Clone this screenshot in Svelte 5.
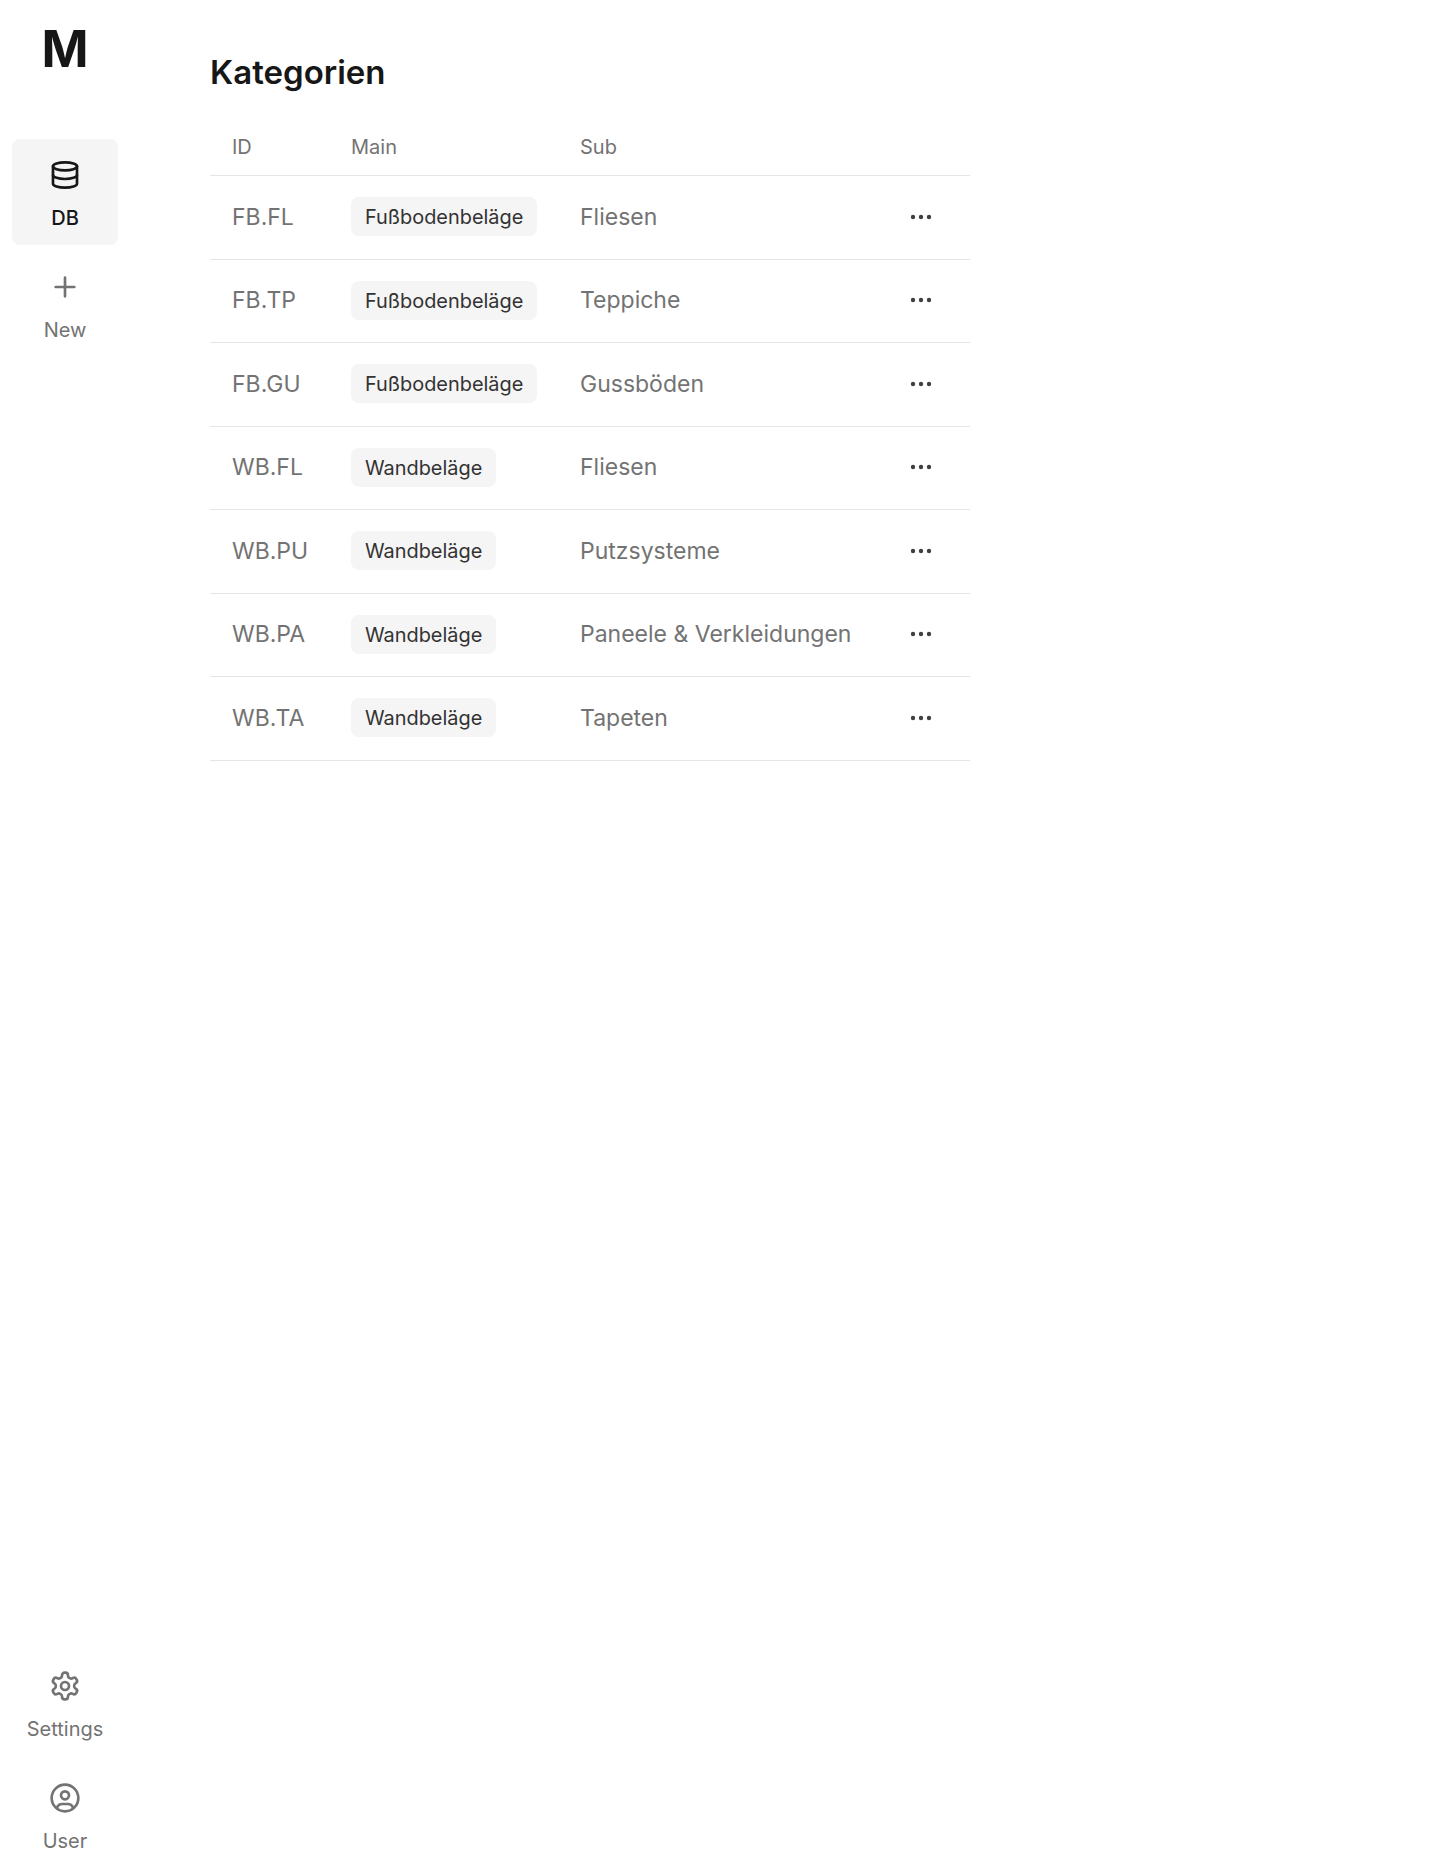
<script lang="ts">
const rows = [
	{ id: 'FB.FL', main: 'Fußbodenbeläge', sub: 'Fliesen' },
	{ id: 'FB.TP', main: 'Fußbodenbeläge', sub: 'Teppiche' },
	{ id: 'FB.GU', main: 'Fußbodenbeläge', sub: 'Gussböden' },
	{ id: 'WB.FL', main: 'Wandbeläge', sub: 'Fliesen' },
	{ id: 'WB.PU', main: 'Wandbeläge', sub: 'Putzsysteme' },
	{ id: 'WB.PA', main: 'Wandbeläge', sub: 'Paneele & Verkleidungen' },
	{ id: 'WB.TA', main: 'Wandbeläge', sub: 'Tapeten' }
];
</script>

<div class="layout">
	<nav class="sidebar">
		<div class="logo">M</div>

		<div class="nav-top">
			<button class="nav-item active">
				<svg viewBox="0 0 24 24" class="icon">
					<ellipse cx="12" cy="5.5" rx="9" ry="3" />
					<path d="M3 5.500v13c0 1.660 4 3 9 3s9-1.340 9-3v-13" />
					<path d="M3 12c0 1.660 4 3 9 3s9-1.340 9-3" />
				</svg>
				<span>DB</span>
			</button>
			<button class="nav-item">
				<svg viewBox="0 0 24 24" class="icon">
					<path d="M12 5v14M5 12h14" />
				</svg>
				<span>New</span>
			</button>
		</div>

		<div class="nav-bottom">
			<button class="nav-item">
				<svg viewBox="0 0 24 24" class="icon">
					<path d="M12.220 2h-.44a2 2 0 0 0-2 2v.18a2 2 0 0 1-1 1.730l-.43.25a2 2 0 0 1-2 0l-.15-.08a2 2 0 0 0-2.730.73l-.22.38a2 2 0 0 0 .73 2.730l.15.1a2 2 0 0 1 1 1.720v.51a2 2 0 0 1-1 1.740l-.15.09a2 2 0 0 0-.73 2.730l.22.38a2 2 0 0 0 2.730.73l.15-.08a2 2 0 0 1 2 0l.43.25a2 2 0 0 1 1 1.730V20a2 2 0 0 0 2 2h.44a2 2 0 0 0 2-2v-.18a2 2 0 0 1 1-1.730l.43-.25a2 2 0 0 1 2 0l.15.08a2 2 0 0 0 2.730-.73l.22-.39a2 2 0 0 0-.73-2.730l-.15-.08a2 2 0 0 1-1-1.740v-.5a2 2 0 0 1 1-1.740l.15-.09a2 2 0 0 0 .73-2.730l-.22-.38a2 2 0 0 0-2.730-.73l-.15.08a2 2 0 0 1-2 0l-.43-.25a2 2 0 0 1-1-1.730V4a2 2 0 0 0-2-2z" />
					<circle cx="12" cy="12" r="3" />
				</svg>
				<span>Settings</span>
			</button>
			<button class="nav-item">
				<svg viewBox="0 0 24 24" class="icon">
					<circle cx="12" cy="12" r="10" />
					<circle cx="12" cy="10" r="3" />
					<path d="M6 19.500c.5-2 2-3 4-3h4c2 0 3.500 1 4 3" />
				</svg>
				<span>User</span>
			</button>
		</div>
	</nav>

	<main class="content">
		<h1>Kategorien</h1>

		<table>
			<colgroup>
				<col class="col-id" />
				<col class="col-main" />
				<col class="col-sub" />
				<col />
			</colgroup>
			<thead>
				<tr>
					<th>ID</th>
					<th>Main</th>
					<th>Sub</th>
					<th></th>
				</tr>
			</thead>
			<tbody>
				{#each rows as row}
					<tr>
						<td>{row.id}</td>
						<td><span class="badge">{row.main}</span></td>
						<td>{row.sub}</td>
						<td class="actions">
							<svg viewBox="0 0 22 6" class="dots">
								<circle cx="3" cy="3" r="2.200" />
								<circle cx="11" cy="3" r="2.200" />
								<circle cx="19" cy="3" r="2.200" />
							</svg>
						</td>
					</tr>
				{/each}
			</tbody>
		</table>
	</main>
</div>

<style>
	:global(body) {
		margin: 0;
		background: #fff;
		font-family: Inter, 'Liberation Sans', sans-serif;
	}

	.layout {
		display: flex;
		height: 1857px;
		overflow: hidden;
	}

	/* --- Sidebar --- */
	.sidebar {
		width: 130px;
		flex-shrink: 0;
		display: flex;
		flex-direction: column;
		align-items: center;
	}

	.logo {
		margin-top: 19px;
		height: 60px;
		font-size: 50.500px;
		line-height: 60px;
		font-weight: 700;
		color: #171717;
	}

	.nav-top {
		margin-top: 60px;
		display: flex;
		flex-direction: column;
		gap: 6px;
	}

	.nav-bottom {
		margin-top: auto;
		display: flex;
		flex-direction: column;
		gap: 6px;
		margin-bottom: -11px;
	}

	.nav-item {
		width: 106px;
		height: 106px;
		padding: 20px 0 0;
		border: none;
		border-radius: 8px;
		background: transparent;
		color: #737373;
		font: inherit;
		font-size: 20px;
		font-weight: 400;
		display: flex;
		flex-direction: column;
		align-items: center;
		justify-content: flex-start;
		gap: 15px;
	}

	.nav-item.active {
		background: #f5f5f5;
		color: #171717;
		font-weight: 500;
	}

	.icon {
		width: 32px;
		height: 32px;
		fill: none;
		stroke: currentColor;
		stroke-width: 2;
		stroke-linecap: round;
		stroke-linejoin: round;
	}

	/* --- Table --- */
	.content {
		padding: 50px 0 0 80px;
	}

	h1 {
		margin: 0 0 29px;
		font-size: 33px;
		line-height: 44px;
		font-weight: 600;
		color: #171717;
	}

	table {
		width: 760px;
		table-layout: fixed;
		border-collapse: collapse;
	}

	.col-id { width: 119px; }
	.col-main { width: 229px; }
	.col-sub { width: 315px; }

	th {
		height: 47px;
		padding: 0 22px 5px;
		text-align: left;
		font-size: 20px;
		font-weight: 400;
		color: #737373;
		border-bottom: 1px solid #e5e5e5;
	}

	td {
		height: 81.500px;
		padding: 0 22px 1px;
		font-size: 23px;
		color: #737373;
		white-space: nowrap;
		border-bottom: 1px solid #e5e5e5;
	}

	.badge {
		display: inline-block;
		padding: 7px 14px 5px;
		border-radius: 8px;
		background: #f5f5f5;
		color: #333;
		font-size: 19.900px;
		font-weight: 400;
		line-height: 27px;
	}

	.actions {
		text-align: right;
		padding-right: 38px;
	}

	.dots {
		display: block;
		margin-left: auto;
		width: 22px;
		height: 6px;
		fill: #404040;
	}
</style>
